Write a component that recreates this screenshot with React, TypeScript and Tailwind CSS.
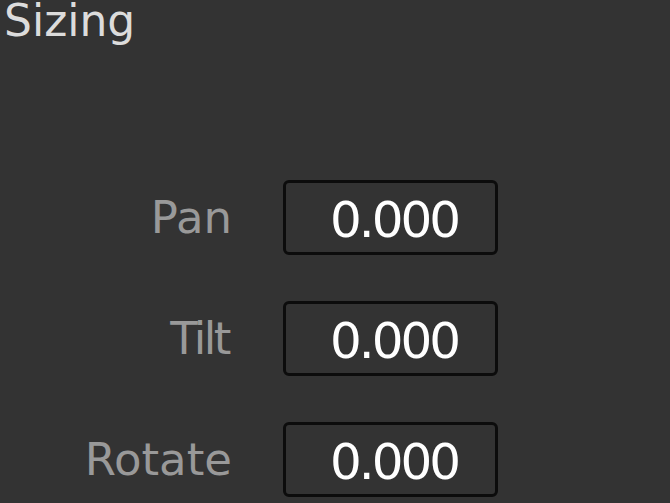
import React from 'react';

const rows = [
  { label: 'Pan', value: '0.000' },
  { label: 'Tilt', value: '0.000' },
  { label: 'Rotate', value: '0.000' },
];

export default function App() {
  return (
    <div
      className="w-[670px] h-[503px] overflow-hidden bg-[#333333]"
      style={{ fontFamily: '"DejaVu Sans", sans-serif' }}
    >
      <h1 className="pl-[4px] text-[44px] leading-[42px] text-[#dcdcdc]">Sizing</h1>

      <div className="mt-[138px] flex flex-col gap-[46px]">
        {rows.map((r) => (
          <div key={r.label} className="flex items-center">
            <span
              className={`w-[232px] text-right text-[45px] leading-none text-[#999999] ${
                r.label === 'Tilt' ? 'pr-[3px] tracking-[-2.5px]' : ''
              }`}
            >
              {r.label}
            </span>
            <div className="ml-[51px] flex h-[75px] w-[215px] items-center justify-center rounded-[6px] border-[3px] border-[#0c0c0c] pl-[7px] pt-[4px] text-[50px] leading-none tracking-[-3px] text-white">
              {r.value}
            </div>
          </div>
        ))}
      </div>
    </div>
  );
}
